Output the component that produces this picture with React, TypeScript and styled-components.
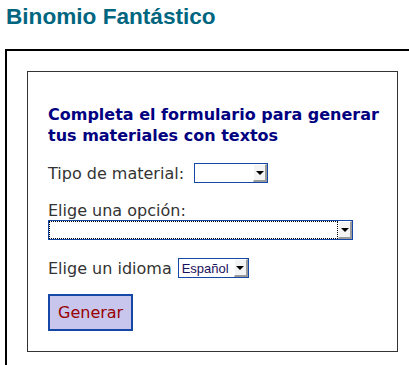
import React from "react";
import styled, { createGlobalStyle } from "styled-components";

const GlobalStyle = createGlobalStyle`
  html, body {
    margin: 0;
    padding: 0;
    overflow: hidden;
    background: #fff;
  }
  body {
    padding: 4px 5px;
    font-family: "DejaVu Sans", Verdana, sans-serif;
  }
`;

const Title = styled.h1`
  margin: 0 0 19px 0;
  font-family: "Liberation Sans", Arial, sans-serif;
  font-size: 22.6px;
  font-weight: bold;
  color: #006680;
  padding-left: 1px;
`;

const OuterBox = styled.div`
  width: 440px;
  border: 2px solid #000;
  padding: 20px 20px 40px 20px;
  box-sizing: border-box;
`;

const FormBox = styled.form`
  width: 371px;
  box-sizing: border-box;
  border: 1px solid #333;
  padding: 20px;
  display: flex;
  flex-direction: column;
  align-items: flex-start;
`;

const Heading = styled.h2`
  margin: 12px 0 17px 0;
  font-size: 16px;
  line-height: 21px;
  font-weight: bold;
  color: #000080;
  white-space: nowrap;
`;

const InlineRow = styled.div<{ $gap: number }>`
  display: flex;
  align-items: center;
  gap: ${(p) => p.$gap}px;
  margin-bottom: 18px;
`;

const Label = styled.label`
  font-size: 16px;
  line-height: 19px;
  color: #333;
`;

const BlockField = styled.div`
  display: flex;
  flex-direction: column;
  margin-bottom: 18px;
`;

const SelectFrame = styled.div<{ $width: number }>`
  display: flex;
  width: ${(p) => p.$width}px;
  height: 20px;
  box-sizing: border-box;
  border: 1px solid #1447a6;
  background: #fff;
`;

const NativeSelect = styled.select<{ $focused?: boolean }>`
  appearance: none;
  -webkit-appearance: none;
  flex: 1;
  min-width: 0;
  height: 100%;
  margin: 0;
  padding: 0 0 0 3px;
  background: #fff;
  font-family: "Liberation Sans", Arial, sans-serif;
  font-size: 13px;
  color: #1a1060;
  box-sizing: border-box;
  border: ${(p) => (p.$focused ? "1px dotted #000" : "none")};
  border-radius: 0;
  outline: none;
`;

const ArrowBox = styled.span`
  width: 14px;
  height: 100%;
  box-sizing: border-box;
  background: #f4f4f4;
  border-top: 1px solid #fff;
  border-left: 1px solid #fff;
  border-right: 2px solid #9a9a9a;
  border-bottom: 2px solid #9a9a9a;
  display: flex;
  align-items: center;
  justify-content: center;

  &::after {
    content: "";
    display: block;
    margin-top: 1px;
    border-left: 4px solid transparent;
    border-right: 4px solid transparent;
    border-top: 4px solid #000;
  }
`;

const SubmitButton = styled.button`
  font-family: "DejaVu Sans", Verdana, sans-serif;
  font-size: 16px;
  line-height: 19px;
  color: #990000;
  background: #c8c6ec;
  border: 2px solid #1447a6;
  padding: 7px 8px;
  margin-top: -2px;
  cursor: pointer;
`;

function Dropdown({
  width,
  focused,
  options,
}: {
  width: number;
  focused?: boolean;
  options: string[];
}) {
  return (
    <SelectFrame $width={width}>
      <NativeSelect $focused={focused}>
        {options.map((o) => (
          <option key={o}>{o}</option>
        ))}
      </NativeSelect>
      <ArrowBox />
    </SelectFrame>
  );
}

export default function App() {
  return (
    <>
      <GlobalStyle />
      <Title>Binomio Fantástico</Title>
      <OuterBox>
        <FormBox onSubmit={(e) => e.preventDefault()}>
          <Heading>
            Completa el formulario para generar
            <br />
            tus materiales con textos
          </Heading>
          <InlineRow $gap={10}>
            <Label>Tipo de material:</Label>
            <Dropdown width={74} options={[""]} />
          </InlineRow>
          <BlockField>
            <Label>Elige una opción:</Label>
            <Dropdown width={305} focused options={[""]} />
          </BlockField>
          <InlineRow $gap={6}>
            <Label>Elige un idioma</Label>
            <Dropdown width={71} options={["Español", "English", "Français"]} />
          </InlineRow>
          <SubmitButton type="submit">Generar</SubmitButton>
        </FormBox>
      </OuterBox>
    </>
  );
}
